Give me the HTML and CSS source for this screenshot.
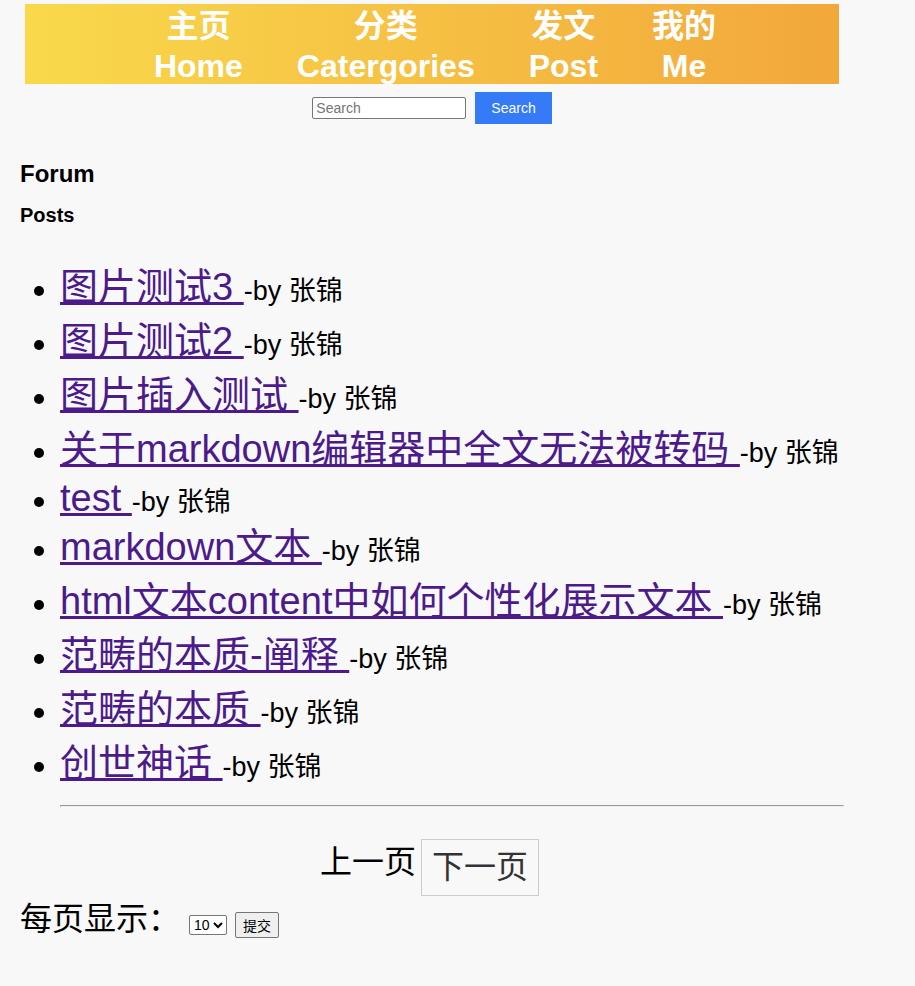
FILE: index.html
```html
<!DOCTYPE html>
<html lang="zh-CN">
<head>
<meta charset="utf-8">
<meta name="viewport" content="width=device-width, initial-scale=1">
<title>Forum</title>
<link rel="stylesheet" href="styles.css">
</head>
<body>
<header>
  <nav class="nav">
    <a href="#home">主页<br>Home</a>
    <a href="#categories">分类<br>Catergories</a>
    <a href="#post">发文<br>Post</a>
    <a href="#me">我的<br>Me</a>
  </nav>
  <form class="search">
    <input class="search-input" type="text" placeholder="Search" aria-label="Search">
    <button class="search-button" type="submit">Search</button>
  </form>
</header>
<main>
  <h2>Forum</h2>
  <h3>Posts</h3>
  <ul class="posts">
    <li><a href="#p10">图片测试3&nbsp;</a>-by 张锦</li>
    <li><a href="#p9">图片测试2&nbsp;</a>-by 张锦</li>
    <li><a href="#p8">图片插入测试&nbsp;</a>-by 张锦</li>
    <li><a href="#p7">关于markdown编辑器中全文无法被转码&nbsp;</a>-by 张锦</li>
    <li class="latin"><a href="#p6">test&nbsp;</a>-by 张锦</li>
    <li><a href="#p5">markdown文本&nbsp;</a>-by 张锦</li>
    <li><a href="#p4">html文本content中如何个性化展示文本&nbsp;</a>-by 张锦</li>
    <li><a href="#p3">范畴的本质-阐释&nbsp;</a>-by 张锦</li>
    <li><a href="#p2">范畴的本质&nbsp;</a>-by 张锦</li>
    <li><a href="#p1">创世神话&nbsp;</a>-by 张锦</li>
  </ul>
  <hr class="divider">
  <div class="pagination">
    <span>上一页</span>
    <a class="next" href="#next">下一页</a>
  </div>
  <form class="page-size">
    <label for="size">每页显示：</label>
    <div class="page-size-controls">
      <select id="size">
        <option>10</option>
        <option>20</option>
        <option>50</option>
      </select>
      <button type="submit">提交</button>
    </div>
  </form>
</main>
</body>
</html>
```
FILE: styles.css
```css
* {
  box-sizing: border-box;
}

body {
  margin: 0;
  padding: 4px 71px 48px 20px;
  background: #f8f8f8;
  color: #000;
  font-family: "Liberation Sans", Arial, "Noto Sans CJK SC", sans-serif;
}

.nav {
  display: flex;
  justify-content: center;
  gap: 54px;
  margin: 0 5px;
  padding: 2px 0 0 6px;
  background: linear-gradient(to right, #f9d94b, #f2a73b);
}

.nav a {
  margin-bottom: -2px;
  color: #fff;
  font-size: 32px;
  font-weight: bold;
  line-height: 40px;
  text-align: center;
  text-decoration: none;
}

.search {
  display: flex;
  justify-content: center;
  align-items: center;
  gap: 9px;
  margin-top: 8px;
}

.search-input {
  width: 154px;
  height: 22px;
  padding: 1px 3px;
  border: 1px solid #767676;
  border-radius: 2px;
  font: 14px "Liberation Sans", Arial, sans-serif;
}

.search-button {
  height: 32px;
  padding: 0 16px;
  border: 0;
  background: #357af6;
  color: #fff;
  font: 14px "Liberation Sans", Arial, sans-serif;
}

h2 {
  margin: 36px 0 0;
  font-size: 24px;
  line-height: 28px;
}

h3 {
  margin: 15px 0 0;
  font-size: 20px;
  line-height: 24px;
}

.posts {
  margin: 38px 0 0;
  padding-left: 40px;
  font-size: 27px;
  line-height: 24px;
  white-space: nowrap;
}

.posts li {
  margin-bottom: 10px;
}

.posts li::marker {
  font-size: 32px;
}

.posts a {
  color: #4c1a8b;
  font-size: 38px;
  line-height: 44px;
  text-decoration-thickness: 3px;
  text-underline-offset: 2px;
  text-decoration-skip-ink: none;
}

.posts .latin a {
  line-height: 34px;
}

.divider {
  margin: 20px 0 32px 40px;
}

.pagination {
  display: flex;
  justify-content: center;
  align-items: flex-start;
  gap: 5px;
  padding-right: 5px;
  font-size: 32px;
  line-height: 47px;
}

.next {
  padding: 4px 10px;
  border: 1px solid #ccc;
  color: #333;
  text-decoration: none;
}

.page-size {
  display: flex;
  align-items: flex-end;
  gap: 9px;
  margin-top: 4px;
}

.page-size label {
  font-size: 32px;
  line-height: 38px;
}

.page-size-controls {
  display: flex;
  align-items: center;
  gap: 8px;
}

.page-size select {
  width: 38px;
  height: 20px;
  padding: 0;
  border: 1px solid #767676;
  border-radius: 2px;
  background: #fff;
  font: 14px "Liberation Sans", Arial, sans-serif;
}

.page-size button {
  width: 44px;
  height: 26px;
  padding: 0;
  border: 1px solid #767676;
  border-radius: 2px;
  background: #efefef;
  color: #000;
  font: 14px "Liberation Sans", Arial, "Noto Sans CJK SC", sans-serif;
}
```
